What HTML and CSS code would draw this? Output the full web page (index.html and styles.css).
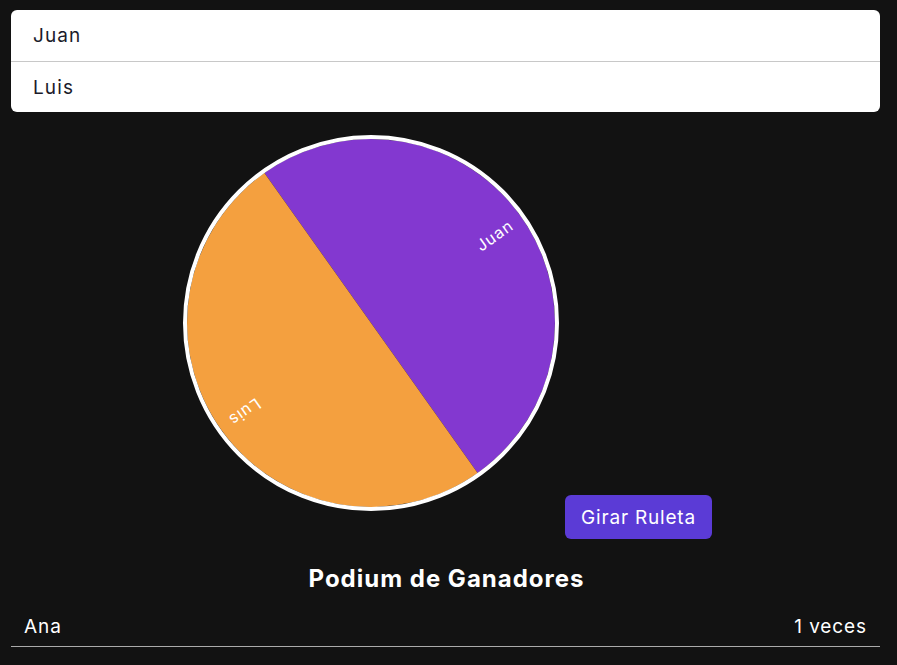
FILE: index.html
```html
<!DOCTYPE html>
<html lang="es">
<head>
<meta charset="utf-8">
<title>Ruleta</title>
<link rel="stylesheet" href="styles.css">
</head>
<body>
<div class="app">
  <ul class="names">
    <li class="name">Juan</li>
    <li class="name">Luis</li>
  </ul>

  <div class="stage">
    <svg class="wheel" width="380" height="380" viewBox="0 0 380 380">
      <path d="M190 190 L83.4 40 A184 184 0 0 1 296.6 340 Z" fill="#8338d0"/>
      <path d="M190 190 L296.6 340 A184 184 0 0 1 83.4 40 Z" fill="#f4a03f"/>
      <circle cx="190" cy="190" r="186" fill="none" stroke="#ffffff" stroke-width="4"/>
      <g class="label" transform="translate(190 190) rotate(-35.4)">
        <text x="172" y="0" text-anchor="end" dominant-baseline="central">Juan</text>
      </g>
      <g class="label" transform="translate(190 190) rotate(144.6)">
        <text x="172" y="0" text-anchor="end" dominant-baseline="central">Luis</text>
      </g>
    </svg>
    <button class="spin">Girar Ruleta</button>
  </div>

  <h2 class="podium-title">Podium de Ganadores</h2>
  <ul class="podium">
    <li class="podium-row"><span>Ana</span><span>1 veces</span></li>
  </ul>
</div>
</body>
</html>
```

FILE: styles.css
```css
html, body {
  margin: 0;
  padding: 0;
  background: #121212;
}
body {
  font-family: "Inter", "Open Sans", sans-serif;
  color: #ffffff;
}
.app {
  width: 869px;
  margin-left: 11px;
  padding-top: 10px;
}
.names {
  list-style: none;
  margin: 0;
  padding: 0;
  background: #ffffff;
  border-radius: 6px;
  overflow: hidden;
}
.name {
  box-sizing: border-box;
  height: 51px;
  display: flex;
  align-items: center;
  padding-left: 22px;
  font-size: 19px;
  letter-spacing: 1.1px;
  color: #1b1b2a;
}
.name + .name {
  border-top: 1px solid #c8c8c8;
}
.stage {
  display: flex;
  justify-content: center;
  align-items: flex-end;
  gap: 4px;
  margin-top: 21px;
  padding-left: 2px;
}
.wheel {
  display: block;
  margin-bottom: 26px;
}
.label text {
  fill: #ffffff;
  font-family: "Inter", "Open Sans", sans-serif;
  font-size: 16px;
  letter-spacing: 1px;
}
.spin {
  width: 147px;
  height: 44px;
  border: none;
  border-radius: 6px;
  background: #5b3bd6;
  color: #ffffff;
  font-family: "Inter", "Open Sans", sans-serif;
  font-size: 19px;
  letter-spacing: 0.8px;
  padding: 0;
}
.podium-title {
  margin: 22px 0 0;
  text-align: center;
  font-size: 24px;
  font-weight: 700;
  letter-spacing: 1px;
  line-height: 36px;
  padding-left: 2px;
}
.podium {
  list-style: none;
  margin: 10px 0 0;
  padding: 0;
}
.podium-row {
  display: flex;
  justify-content: space-between;
  height: 39px;
  align-items: center;
  padding: 0 13px;
  font-size: 19px;
  letter-spacing: 0.9px;
  border-bottom: 1px solid #aaaaaa;
}
```
